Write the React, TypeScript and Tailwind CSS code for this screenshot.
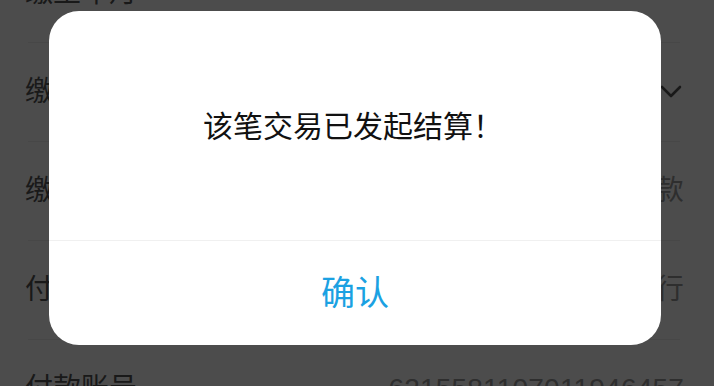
import * as React from "react";

const ROWS = [
  { label: "缴至年月", value: "" },
  { label: "缴费方式", value: "", chevron: true },
  { label: "缴费类型", value: "自主缴款" },
  { label: "付款银行", value: "中国工商银行" },
  { label: "付款账号", value: "6215581107011946457" },
];

function ChevronDown() {
  return (
    <svg width="22" height="14" viewBox="0 0 22 14" fill="none" className="mr-[2px]">
      <path d="M2 2 L11 11 L20 2" stroke="#555" strokeWidth="2.6" strokeLinecap="round" strokeLinejoin="round" />
    </svg>
  );
}

export default function App() {
  return (
    <div
      className="relative w-[714px] h-[386px] overflow-hidden bg-white"
      style={{ fontFamily: '"Liberation Sans", "Noto Sans CJK SC", sans-serif' }}
    >
      {/* Form behind the dialog */}
      <div className="-mt-[56px] flex flex-col">
        {ROWS.map((r) => (
          <div key={r.label} className="flex flex-col">
            <div className="h-[98px] flex items-center justify-between pl-[25px] pr-[30px] text-[28px]">
              <span className="text-[#555]">{r.label}</span>
              {r.chevron ? (
                <ChevronDown />
              ) : (
                <span className="text-[#999] tracking-[0.2px]">{r.value}</span>
              )}
            </div>
            <div className="ml-[28px] mr-[34px] border-b border-[#eeeeee]" />
          </div>
        ))}
      </div>

      {/* Mask + dialog */}
      <div className="absolute inset-0 bg-black/70 pt-[11px] pl-[49px]">
        <div className="w-[612px] h-[334px] bg-white rounded-[30px] flex flex-col overflow-hidden">
          <div className="h-[229px] flex items-center justify-center pt-[2px] pr-[4px] text-[30px] text-[#111]">
            该笔交易已发起结算！
          </div>
          <div className="border-t border-[#f0f0f0] flex-1 flex items-center justify-center text-[34px] text-[#1ba1e2]">
            确认
          </div>
        </div>
      </div>
    </div>
  );
}
